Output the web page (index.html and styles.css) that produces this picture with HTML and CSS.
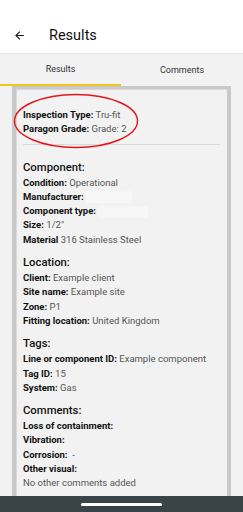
FILE: index.html
```html
<!DOCTYPE html>
<html lang="en">
<head>
    <meta charset="UTF-8">
    <meta name="viewport" content="width=device-width, initial-scale=1.0">
    <title>Results</title>
    <link rel="stylesheet" href="styles.css">
</head>
<body>

<div class="topBar">
    <svg class="backArrow" width="12" height="12" viewBox="0 0 24 24">
        <path d="M20 11H7.83l5.59-5.59L12 4l-8 8 8 8 1.41-1.41L7.83 13H20v-2z" fill="#111"/>
    </svg>
    <h1 class="title">Results</h1>
</div>

<div class="tabs">
    <div class="tab active">Results</div>
    <div class="tab">Comments</div>
</div>

<div class="page">
    <div class="card">
        <div class="intro">
            <p><b>Inspection Type:</b> Tru-fit</p>
            <p><b>Paragon Grade:</b> Grade: 2</p>
            <svg class="circleMark" width="126" height="56" viewBox="0 0 126 56">
                <ellipse cx="63" cy="28" rx="61.5" ry="26.5" fill="none" stroke="#e8141b" stroke-width="1.4"/>
            </svg>
        </div>
        <hr class="divider">

        <div class="section">
            <h2>Component:</h2>
            <p><b>Condition:</b> Operational</p>
            <p><b>Manufacturer:</b> <span class="hidden short"></span></p>
            <p><b>Component type:</b> <span class="hidden"></span></p>
            <p><b>Size:</b> 1/2"</p>
            <p><b>Material</b> 316 Stainless Steel</p>
        </div>

        <div class="section">
            <h2>Location:</h2>
            <p><b>Client:</b> Example client</p>
            <p><b>Site name:</b> Example site</p>
            <p><b>Zone:</b> P1</p>
            <p><b>Fitting location:</b> United Kingdom</p>
        </div>

        <div class="section">
            <h2>Tags:</h2>
            <p><b>Line or component ID:</b> Example component</p>
            <p><b>Tag ID:</b> 15</p>
            <p><b>System:</b> Gas</p>
        </div>

        <div class="section">
            <h2>Comments:</h2>
            <p><b>Loss of containment:</b></p>
            <p><b>Vibration:</b></p>
            <p><b>Corrosion:</b> &nbsp;-</p>
            <p><b>Other visual:</b></p>
            <p>No other comments added</p>
        </div>
    </div>
</div>

<div class="navBar">
    <div class="pill"></div>
</div>

</body>
</html>
```

FILE: styles.css
```css
body {
    font-family: Roboto, "Noto Sans", sans-serif;
    margin: 0;
    padding: 0;
    width: 243px;
    height: 512px;
    overflow: hidden;
    background-color: #f2f2f2;
    color: #1a1a1a;
    position: relative;
}
.topBar {
    height: 54px;
    background-color: #fff;
    border-bottom: 1px solid #e4e4e4;
    display: flex;
    align-items: center;
    padding-top: 17px;
    box-sizing: border-box;
}
.backArrow {
    margin-left: 13px;
    width: 13px;
    height: 13px;
}
.title {
    font-size: 14.5px;
    font-weight: 400;
    margin: 0 0 0 23px;
    color: #111;
}
.tabs {
    display: grid;
    grid-template-columns: 121px 1fr;
    height: 32px;
    background-color: #f2f2f2;
}
.tab {
    display: flex;
    align-items: center;
    justify-content: center;
    font-size: 9px;
    color: #333;
    padding-bottom: 1px;
}
.tab.active {
    border-bottom: 2px solid #f3c41c;
    padding-bottom: 0;
}
.page {
    padding: 0 12px;
}
.card {
    border: 4px solid #c9c9c9;
    border-bottom: none;
    border-top-width: 3px;
    background-color: #f2f2f2;
    padding: 19px 7px 0 7px;
    height: 426px;
    box-sizing: border-box;
    box-shadow: inset 1px 1px 0 #d9d9d9;
}
.intro {
    position: relative;
}
.circleMark {
    position: absolute;
    left: -10px;
    top: -15px;
}
p {
    margin: 0;
    font-size: 9.5px;
    line-height: 14.3px;
    color: #555;
    white-space: nowrap;
}
p b {
    color: #111;
    font-weight: 700;
}
.divider {
    border: none;
    border-top: 1px solid #d9d9d9;
    margin: 7px 0 15px 0;
}
.section {
    margin-bottom: 8px;
}
h2 {
    font-size: 11.3px;
    font-weight: 500;
    line-height: 16px;
    margin: 0;
    color: #111;
}
.hidden {
    display: inline-block;
    width: 50px;
    height: 12px;
    vertical-align: middle;
    background-color: #f6f6f6;
}
.hidden.short {
    width: 46px;
}
.navBar {
    position: absolute;
    left: 0;
    right: 0;
    bottom: 0;
    height: 16px;
    background-color: #3a4347;
    display: flex;
    align-items: center;
    justify-content: center;
}
.pill {
    width: 81px;
    height: 3px;
    border-radius: 2px;
    background-color: #fff;
}
```
